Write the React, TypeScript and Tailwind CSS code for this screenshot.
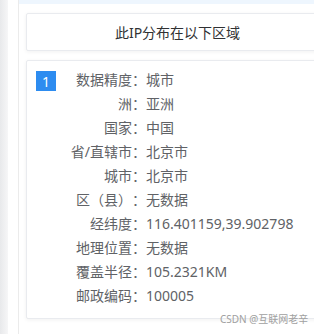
import React from 'react';

const rows: [string, string][] = [
  ['数据精度：', '城市'],
  ['洲：', '亚洲'],
  ['国家：', '中国'],
  ['省/直辖市：', '北京市'],
  ['城市：', '北京市'],
  ['区（县）：', '无数据'],
  ['经纬度：', '116.401159,39.902798'],
  ['地理位置：', '无数据'],
  ['覆盖半径：', '105.2321KM'],
  ['邮政编码：', '100005'],
];

export default function App() {
  return (
    <div
      className="relative flex h-[334px] w-[314px] overflow-hidden bg-white [text-spacing-trim:space-all]"
      style={{ fontFamily: '"Noto Sans", "Noto Sans CJK SC", sans-serif' }}
    >
      {/* left rail */}
      <div className="w-[8px] shrink-0 bg-gradient-to-r from-[#e8e9eb] to-[#f6f6f7]" />
      <div className="w-[10px] shrink-0" />
      <div className="w-px shrink-0 bg-[#ebebeb]" />

      <div className="flex min-w-0 flex-1 flex-col">
        <div className="h-[4px] bg-[#eef6fe]" />
        <div className="flex flex-col gap-[9px] pl-[7px] pt-[9px]">
          {/* title card */}
          <div className="flex h-[38px] w-[303px] shrink-0 items-center justify-center rounded-[2px] border border-[#e9ebef] bg-white text-[14px] text-[#303133] shadow-[0_1px_4px_rgba(0,0,0,0.06)]">
            此IP分布在以下区域
          </div>

          {/* detail card */}
          <div className="flex w-[303px] shrink-0 rounded-[2px] border border-[#e9ebef] bg-white px-[9px] pb-[10px] pt-[7px] shadow-[0_1px_4px_rgba(0,0,0,0.06)]">
            <div className="mt-[3px] flex h-[20px] w-[20px] shrink-0 items-center justify-center bg-[#2d8cf0] text-[14px] text-white">
              1
            </div>
            <div className="grid grid-cols-[90px_1fr] text-[14px] leading-[24px] text-[#606266]">
              {rows.map(([k, v]) => (
                <React.Fragment key={k}>
                  <div className="whitespace-nowrap text-right">{k}</div>
                  <div className="whitespace-nowrap">{v}</div>
                </React.Fragment>
              ))}
            </div>
          </div>
        </div>
      </div>

      {/* watermark */}
      <div className="absolute left-[220px] top-[312px] text-[10px] text-[#a0a0a0]">
        CSDN @互联网老辛
      </div>
    </div>
  );
}
